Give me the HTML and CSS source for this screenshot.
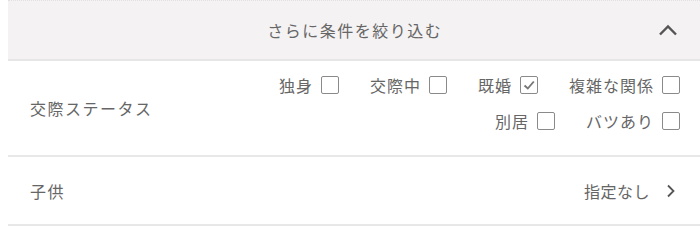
FILE: index.html
```html
<!DOCTYPE html>
<html lang="ja">
<head>
<meta charset="utf-8">
<link rel="stylesheet" href="styles.css">
</head>
<body>
<div class="panel">
  <div class="head">
    <span class="spacer"></span>
    <span class="head-title">さらに条件を絞り込む</span>
    <span class="head-icon">
      <svg width="20" height="12" viewBox="0 0 20 12"><polyline points="2,10.5 10,2.5 18,10.5" fill="none" stroke="#555" stroke-width="2.4"/></svg>
    </span>
  </div>
  <div class="row row-status">
    <div class="row-label">交際ステータス</div>
    <div class="options">
      <label class="opt"><span class="opt-text">独身</span><span class="box"></span></label>
      <label class="opt"><span class="opt-text">交際中</span><span class="box"></span></label>
      <label class="opt"><span class="opt-text">既婚</span><span class="box checked"><svg width="16" height="16" viewBox="0 0 16 16"><polyline points="3.5,8.5 6.8,11.5 12.8,4.5" fill="none" stroke="#777" stroke-width="1.9"/></svg></span></label>
      <label class="opt"><span class="opt-text">複雑な関係</span><span class="box"></span></label>
      <label class="opt"><span class="opt-text">別居</span><span class="box"></span></label>
      <label class="opt"><span class="opt-text">バツあり</span><span class="box"></span></label>
    </div>
  </div>
  <div class="row row-child">
    <div class="row-label">子供</div>
    <div class="value">
      <span class="value-text">指定なし</span>
      <svg width="10" height="14" viewBox="0 0 10 14"><polyline points="2,1.5 7.5,7 2,12.5" fill="none" stroke="#555" stroke-width="1.8"/></svg>
    </div>
  </div>
</div>
</body>
</html>
```
FILE: styles.css
```css
html, body {
  margin: 0;
  padding: 0;
  background: #fff;
}
body {
  font-family: "Noto Sans CJK JP", "Noto Sans", sans-serif;
  color: #666;
}
.panel {
  margin-left: 8px;
}
.head {
  height: 58px;
  background: #f4f2f3;
  border-top: 1px dotted #e2e0e1;
  border-bottom: 2px solid #e6e6e6;
  display: grid;
  grid-template-columns: 1fr auto 1fr;
  align-items: center;
}
.head-title {
  font-size: 16px;
  letter-spacing: 1.5px;
  color: #666;
  margin-right: -1.5px;
}
.head-icon {
  justify-self: end;
  padding-right: 22px;
  display: flex;
}
.row {
  display: flex;
  align-items: center;
  justify-content: space-between;
  border-bottom: 2px solid #e8e8e8;
  padding-left: 22px;
  padding-right: 20px;
}
.row-label {
  font-size: 16px;
  letter-spacing: 1.5px;
  color: #666;
}
.row-status {
  height: 94px;
}
.options {
  width: 420px;
  display: flex;
  flex-wrap: wrap;
  justify-content: flex-end;
  column-gap: 31px;
  row-gap: 12px;
  padding-bottom: 10px;
}
.opt {
  display: flex;
  align-items: center;
  gap: 8px;
  font-size: 16px;
  letter-spacing: 1px;
  color: #666;
}
.box {
  width: 16px;
  height: 16px;
  border: 1px solid #8a8a8a;
  border-radius: 2px;
  background: #fff;
  display: flex;
  align-items: center;
  justify-content: center;
}
.row-child {
  height: 67px;
  padding-right: 24px;
}
.value {
  display: flex;
  align-items: center;
  gap: 16px;
}
.value-text {
  font-size: 16px;
  letter-spacing: 0.5px;
  color: #666;
}
```
